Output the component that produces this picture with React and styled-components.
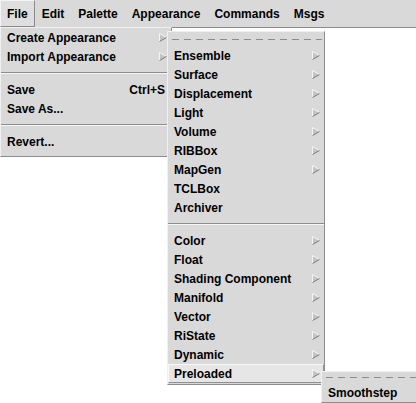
import React from 'react';
import styled, { createGlobalStyle } from 'styled-components';

const GlobalStyle = createGlobalStyle`
  html, body {
    margin: 0;
    padding: 0;
    background: #fff;
  }
  body {
    font-family: "Liberation Sans", Arial, sans-serif;
    font-weight: bold;
    font-size: 12px;
    color: #000;
  }
`

const Screen = styled.div`
  position: relative;
  width: 416px;
  height: 403px;
  overflow: hidden;
  background: #fff;
`

const MenuBar = styled.div`
  display: flex;
  height: 28px;
  background: #d9d9d9;
  border-bottom: 1px solid #8c8c8c;
  box-sizing: border-box;
`

const BarItem = styled.div`
  display: flex;
  align-items: center;
  padding: 0 6px;
  height: 27px;
  box-sizing: border-box;
  border: 1px solid transparent;
  ${p => p.active && `
    background: #dedede;
    border-color: #f4f4f4 #8c8c8c #8c8c8c #f4f4f4;
  `}
`

const Menu = styled.div`
  position: absolute;
  top: ${p => p.top}px;
  left: ${p => p.left}px;
  width: ${p => p.width}px;
  background: #d9d9d9;
  border: 1px solid;
  border-color: #f0f0f0 #8c8c8c #8c8c8c #f0f0f0;
  box-sizing: border-box;
  padding-bottom: ${p => p.pb || 0}px;
`

const Item = styled.div`
  display: flex;
  align-items: center;
  justify-content: space-between;
  height: 19px;
  padding: 0 4px 0 6px;
  white-space: nowrap;
  box-sizing: border-box;
  ${p => p.active && `
    background: #e6e6e6;
    border: 1px solid;
    border-color: #f8f8f8 #909090 #909090 #f8f8f8;
    padding: 0 3px 0 5px;
  `}
`

const Accel = styled.span`
  padding-right: 2px;
`

const Separator = styled.div`
  height: 14px;
  display: flex;
  align-items: center;
  &::after {
    content: '';
    flex: 1;
    height: 0;
    border-top: 1px solid #8c8c8c;
    border-bottom: 1px solid #f6f6f6;
  }
`

const Tearoff = styled.div`
  height: ${p => p.h || 14}px;
  display: flex;
  align-items: center;
  padding: 0 2px 0 4px;
  &::after {
    content: '';
    flex: 1;
    height: 1px;
    background: repeating-linear-gradient(90deg, #8c8c8c 0 7px, transparent 7px 12px);
  }
`

const ArrowBox = styled.svg`
  width: 8px;
  height: 9px;
  flex: none;
`

const Arrow = () => (
  <ArrowBox viewBox="0 0 8 9">
    <polygon points="0.5,0.5 7.5,4.5 0.5,8.5" fill="#c4c4c4" />
    <polyline points="0.5,8.5 0.5,0.5 7.5,4.5" fill="none" stroke="#f4f4f4" strokeWidth="1" />
    <line x1="7.5" y1="4.5" x2="0.5" y2="8.5" stroke="#7a7a7a" strokeWidth="1" />
  </ArrowBox>
)

const MenuRow = ({ label, sub, accel, active }) => (
  <Item active={active}>
    <span>{label}</span>
    {sub && <Arrow />}
    {accel && <Accel>{accel}</Accel>}
  </Item>
)

const barItems = ['File', 'Edit', 'Palette', 'Appearance', 'Commands', 'Msgs'];

const groupA = ['Ensemble', 'Surface', 'Displacement', 'Light', 'Volume', 'RIBBox', 'MapGen'];
const groupB = ['TCLBox', 'Archiver'];
const groupC = ['Color', 'Float', 'Shading Component', 'Manifold', 'Vector', 'RiState', 'Dynamic'];

export default function App() {
  return (
    <Screen>
      <GlobalStyle />
      <MenuBar>
        {barItems.map(name => (
          <BarItem key={name} active={name === 'File'}>{name}</BarItem>
        ))}
      </MenuBar>

      <Menu top={27} left={0} width={172} pb={5}>
        <MenuRow label="Create Appearance" sub />
        <MenuRow label="Import Appearance" sub />
        <Separator />
        <MenuRow label="Save" accel="Ctrl+S" />
        <MenuRow label="Save As..." />
        <Separator />
        <MenuRow label="Revert..." />
      </Menu>

      <Menu top={31} left={167} width={158} pb={1}>
        <Tearoff />
        {groupA.map(n => <MenuRow key={n} label={n} sub />)}
        {groupB.map(n => <MenuRow key={n} label={n} />)}
        <Separator />
        {groupC.map(n => <MenuRow key={n} label={n} sub />)}
        <MenuRow label="Preloaded" sub active />
      </Menu>

      <Menu top={371} left={321} width={100}>
        <Tearoff h={11} />
        <MenuRow label="Smoothstep" />
      </Menu>
    </Screen>
  );
}
